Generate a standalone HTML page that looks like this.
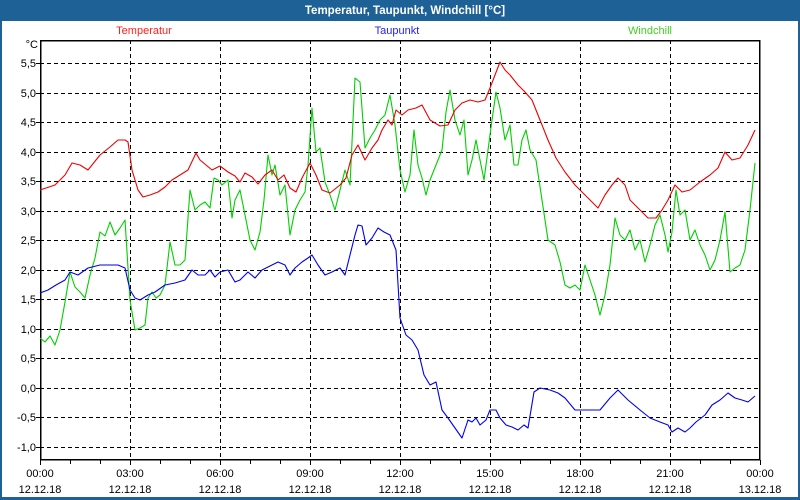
<!DOCTYPE html>
<html><head><meta charset="utf-8"><style>
html,body{margin:0;padding:0;width:800px;height:500px;overflow:hidden;background:#fff}
svg{display:block}
text{font-family:"Liberation Sans",sans-serif;font-size:11px}
</style></head><body>
<svg width="800" height="500" viewBox="0 0 800 500" xmlns="http://www.w3.org/2000/svg">
<rect x="0" y="0" width="800" height="500" fill="#fff"/>
<rect x="0" y="0" width="800" height="21" fill="#1d6197"/>
<rect x="0" y="0" width="2" height="500" fill="#1d6197"/>
<rect x="798" y="0" width="2" height="500" fill="#1d6197"/>
<rect x="0" y="497" width="800" height="3" fill="#1d6197"/>
<text x="405" y="14" text-anchor="middle" fill="#fff" font-weight="bold" style="font-size:11.5px">Temperatur, Taupunkt, Windchill [°C]</text>
<text x="144" y="34" text-anchor="middle" fill="#ff2020">Temperatur</text>
<text x="397" y="34" text-anchor="middle" fill="#2020ff">Taupunkt</text>
<text x="650" y="34" text-anchor="middle" fill="#40d020">Windchill</text>
<g stroke="#000" stroke-width="1" stroke-dasharray="4,3" shape-rendering="crispEdges">
<path d="M40 63.5H760M40 93.5H760M40 122.5H760M40 152.5H760M40 181.5H760M40 211.5H760M40 240.5H760M40 270.5H760M40 299.5H760M40 329.5H760M40 358.5H760M40 388.5H760M40 417.5H760M40 447.5H760"/>
<path d="M130.5 40V460M220.5 40V460M310.5 40V460M400.5 40V460M490.5 40V460M580.5 40V460M670.5 40V460"/>
</g>
<g stroke="#000" stroke-width="1" shape-rendering="crispEdges" fill="none">
<rect x="40.5" y="40.5" width="719" height="419" stroke-width="1.5"/>
<path d="M40.5 460v5M70.5 460v4M100.5 460v4M130.5 460v5M160.5 460v4M190.5 460v4M220.5 460v5M250.5 460v4M280.5 460v4M310.5 460v5M340.5 460v4M370.5 460v4M400.5 460v5M430.5 460v4M460.5 460v4M490.5 460v5M520.5 460v4M550.5 460v4M580.5 460v5M610.5 460v4M640.5 460v4M670.5 460v5M700.5 460v4M730.5 460v4M760.5 460v5"/>
<path d="M36 63.5h4M36 93.5h4M36 122.5h4M36 152.5h4M36 181.5h4M36 211.5h4M36 240.5h4M36 270.5h4M36 299.5h4M36 329.5h4M36 358.5h4M36 388.5h4M36 417.5h4M36 447.5h4"/>
</g>
<g text-anchor="end" fill="#000">
<text x="38" y="48">°C</text>
<text x="36" y="67">5,5</text><text x="36" y="97">5,0</text><text x="36" y="126">4,5</text><text x="36" y="156">4,0</text><text x="36" y="185">3,5</text><text x="36" y="215">3,0</text><text x="36" y="244">2,5</text><text x="36" y="274">2,0</text><text x="36" y="303">1,5</text><text x="36" y="333">1,0</text><text x="36" y="362">0,5</text><text x="36" y="392">0,0</text><text x="36" y="421">-0,5</text><text x="36" y="451">-1,0</text>
</g>
<g text-anchor="middle" fill="#000">
<text x="40" y="477">00:00</text><text x="130" y="477">03:00</text><text x="220" y="477">06:00</text><text x="310" y="477">09:00</text><text x="400" y="477">12:00</text><text x="490" y="477">15:00</text><text x="580" y="477">18:00</text><text x="670" y="477">21:00</text><text x="760" y="477">00:00</text>
<text x="40" y="493">12.12.18</text><text x="130" y="493">12.12.18</text><text x="220" y="493">12.12.18</text><text x="310" y="493">12.12.18</text><text x="400" y="493">12.12.18</text><text x="490" y="493">12.12.18</text><text x="580" y="493">12.12.18</text><text x="670" y="493">12.12.18</text><text x="760" y="493">13.12.18</text>
</g>
<g fill="none" stroke-width="1.1" stroke-linejoin="round">
<polyline stroke="#00d000" points="40,338 45,342 50,336 55,345 60,330 65,302 70,272 75,287 80,292 85,298 90,275 95,258 100,232 105,236 110,222 115,235 120,228 125,220 130,300 135,330 140,328 145,325 148,298 152,292 156,298 160,295 165,285 170,242 175,265 180,265 185,260 190,190 195,210 200,205 205,202 210,208 214,178 218,180 222,185 228,180 232,218 235,200 240,190 245,215 250,240 255,250 260,232 264,200 268,155 272,175 275,165 280,195 285,185 290,235 295,210 300,200 305,192 308,165 312,108 316,152 320,148 325,182 330,195 335,210 340,190 345,170 350,185 355,78 360,82 365,148 370,138 375,130 380,120 385,115 390,95 395,125 400,170 405,192 410,175 414,130 418,165 422,178 426,195 430,180 436,165 442,150 446,112 450,90 455,120 460,135 464,120 468,175 472,160 476,140 480,160 484,180 488,150 492,120 496,92 500,108 505,140 510,125 514,165 518,165 522,140 526,130 530,150 536,160 542,200 548,240 555,245 560,262 565,285 570,288 575,285 580,290 585,265 590,280 595,295 600,315 605,295 610,265 615,218 620,235 625,240 630,230 635,250 640,240 645,262 650,245 655,225 660,215 665,235 668,252 672,232 676,190 680,215 685,210 690,240 695,230 700,245 705,255 710,270 715,260 720,240 725,212 730,272 735,268 740,265 745,250 750,210 755,163"/>
<polyline stroke="#0000ee" points="40,293 48,290 56,285 65,280 70,272 78,275 88,268 100,265 118,265 125,268 130,290 135,298 140,300 148,295 155,292 165,285 175,283 185,280 192,270 198,275 205,275 210,270 215,277 220,272 228,270 235,282 240,280 248,272 255,278 262,270 270,266 278,262 285,265 290,275 295,268 302,262 308,258 312,255 318,265 325,275 332,272 340,268 345,275 350,255 355,235 358,225 362,226 366,245 372,238 378,228 384,232 390,235 396,250 400,318 406,335 412,340 418,350 424,375 430,385 436,382 442,410 448,418 455,428 462,438 468,420 472,422 476,418 480,425 486,420 490,410 496,410 500,418 506,425 512,427 518,430 524,425 528,428 534,392 540,388 550,390 558,393 565,398 575,410 585,410 600,410 610,398 618,390 628,400 640,410 650,418 660,422 668,425 672,432 678,428 685,432 690,428 696,422 705,415 712,405 720,400 728,393 735,398 742,400 748,402 755,396"/>
<polyline stroke="#ee0000" points="40,190 55,185 65,175 72,163 80,165 88,170 100,155 110,147 118,140 125,140 128,142 132,170 138,190 143,197 150,195 158,192 165,187 172,180 180,175 188,170 196,153 200,160 206,165 212,170 220,166 228,172 235,176 240,182 245,173 252,177 258,184 265,175 272,170 278,180 284,175 290,188 296,192 302,178 310,163 316,175 322,190 330,193 340,185 346,178 352,155 358,145 365,160 372,148 378,140 382,130 388,120 392,125 396,110 402,115 408,110 416,108 422,105 430,120 440,126 448,125 455,110 462,103 470,100 478,102 485,100 490,88 495,75 500,62 505,70 510,75 518,85 525,92 532,100 540,120 548,140 556,158 565,172 575,185 588,198 598,208 605,195 612,185 618,178 625,185 630,200 640,210 648,218 656,218 662,210 668,200 675,185 682,192 690,190 700,182 710,175 718,168 725,152 732,160 740,158 748,145 755,130"/>
</g>
</svg>
</body></html>
